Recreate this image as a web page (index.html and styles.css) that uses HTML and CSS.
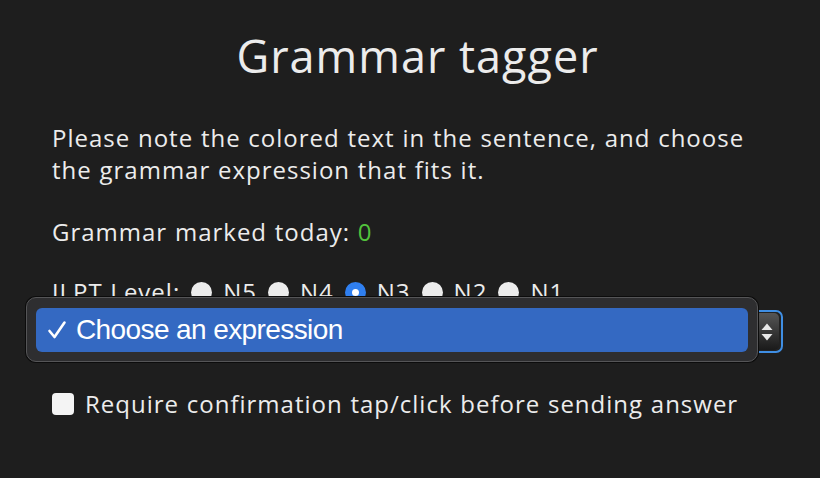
FILE: index.html
```html
<!DOCTYPE html>
<html lang="en">
<head>
  <meta charset="UTF-8" />
  <meta name="viewport" content="width=device-width, initial-scale=1.0"/>
  <title>Grammar tagger</title>
  <link rel="stylesheet" href="styles.css">
</head>
<body>

<div class="page">
  <h1>Grammar tagger</h1>

  <p class="note">Please note the colored text in the sentence, and choose the grammar expression that fits it.</p>

  <p class="count">Grammar marked today: <span class="num">0</span></p>

  <div class="levels">
    <span>JLPT Level:</span>
    <label><span class="radio"></span>N5</label>
    <label><span class="radio"></span>N4</label>
    <label><span class="radio on"></span>N3</label>
    <label><span class="radio"></span>N2</label>
    <label><span class="radio"></span>N1</label>
  </div>

  <div class="picker">
    <div class="select">
      <span class="stepper">
        <svg width="14" height="24" viewBox="0 0 14 24">
          <path d="M1.5 10 L7 3.5 L12.5 10 Z" fill="#e8e8e8"/>
          <path d="M1.5 14 L7 20.5 L12.5 14 Z" fill="#e8e8e8"/>
        </svg>
      </span>
    </div>
    <div class="menu">
      <div class="item">
        <svg class="tick" width="20" height="20" viewBox="0 0 20 20">
          <path d="M2.5 11 L7.5 17 L17.5 2.5" fill="none" stroke="#fff" stroke-width="2.6" stroke-linecap="round" stroke-linejoin="round"/>
        </svg>
        Choose an expression
      </div>
    </div>
  </div>

  <label class="confirm"><span class="box"></span>Require confirmation tap/click before sending answer</label>
</div>

</body>
</html>
```

FILE: styles.css
```css
body { margin: 0; background: #1e1e1e; color: #ececec; font-family: "Open Sans", sans-serif; }
.page { padding: 0 37px 0 52px; }
h1 { margin: 0; padding-top: 28px; text-align: center; font-size: 45px; font-weight: 400; line-height: 56px; letter-spacing: 1px; }
.note, .count, .levels, .confirm { font-size: 24px; line-height: 32px; letter-spacing: 1px; word-spacing: 0.5px; }
.note { margin: 38px 0 0; }
.count { margin: 30px 0 0; }
.num { color: #52c23c; }
.levels { margin-top: 28px; display: flex; align-items: center; height: 32px; gap: 11px; }
.levels label { display: flex; align-items: center; gap: 11px; }
.radio { width: 21px; height: 21px; border-radius: 50%; background: #ececec; box-sizing: border-box; }
.radio.on { background: #fff; border: 7px solid #2f7ff0; }

.picker { position: relative; margin-top: -18px; padding-top: 20px; }
.select { height: 43px; box-sizing: border-box; border: 2px solid #3f8ee3; border-radius: 7px; background: #222; display: flex; justify-content: flex-end; align-items: center; padding-right: 2px; }
.stepper { width: 24px; height: 37px; border-radius: 0 5px 5px 0; background: linear-gradient(#555, #1a1a1a); display: flex; align-items: center; justify-content: center; }
.menu { position: absolute; left: -26px; right: 25px; top: 7px; height: 65px; box-sizing: border-box; background: #2e2e30; border: 1px solid #555557; box-shadow: 0 0 0 1px #0c0c0c; border-radius: 10px; padding: 10px 9px; }
.item { height: 44px; border-radius: 6px; background: #3469c2; color: #fff; font-family: "Liberation Sans", Arial, sans-serif; font-size: 28px; letter-spacing: -0.6px; display: flex; align-items: center; padding-left: 11px; gap: 9px; }
.tick { flex: none; }

.confirm { margin-top: 35px; display: flex; align-items: center; gap: 11px; }
.box { flex: none; width: 22px; height: 22px; border-radius: 4px; background: #f4f4f4; }
```
